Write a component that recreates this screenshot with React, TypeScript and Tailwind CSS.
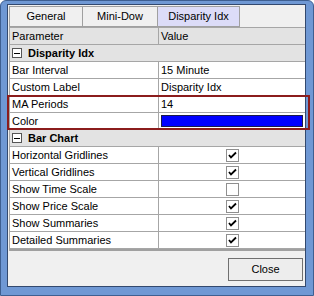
import React from "react";

const font = { fontFamily: '"Liberation Sans", Arial, sans-serif' };

function Check({ on }: { on: boolean }) {
  return (
    <div className="w-[13px] h-[13px] border border-[#8f8f8f] bg-white flex items-center justify-center">
      {on && (
        <svg width="9" height="9" viewBox="0 0 9 9">
          <path d="M1 4 L3 6.5 L8 1.5" stroke="#000" strokeWidth="1.8" fill="none" />
        </svg>
      )}
    </div>
  );
}

function Category({ label }: { label: string }) {
  return (
    <div className="h-[17px] flex items-center bg-[#e3e3e3] border-b border-[#a6a6a6]">
      <div className="ml-[2px] w-[10px] h-[10px] border border-[#555] bg-white flex items-center justify-center">
        <div className="w-[6px] h-px bg-black" />
      </div>
      <span className="ml-[6px] font-bold text-[11px] text-black">{label}</span>
    </div>
  );
}

function Row({ label, children }: { label: string; children: React.ReactNode }) {
  return (
    <div className="h-[17px] flex border-b border-[#a6a6a6] bg-white">
      <div className="w-[149px] border-r border-[#a6a6a6] flex items-center pl-[2px] text-[11px] text-black">{label}</div>
      <div className="flex-1 flex items-center pl-[2px] text-[11px] text-black">{children}</div>
    </div>
  );
}

function CheckRow({ label, on }: { label: string; on: boolean }) {
  return (
    <Row label={label}>
      <div className="w-full flex justify-center pr-[2px]">
        <Check on={on} />
      </div>
    </Row>
  );
}

export default function App() {
  return (
    <div style={font} className="w-[314px] h-[296px] bg-[#6f98d4] rounded-t-[6px] border border-[#3e5f91] pt-[3px] pl-[6px] pr-[7px] pb-[8px]">
      <div className="w-full h-full border border-[#33496e] bg-[#f0f0f0] flex flex-col">
        <div className="flex h-[22px] pt-[1px] pl-[1px]">
          <div className="w-[74px] h-[21px] border border-[#a0a0a0] bg-[#f0f0f0] flex items-center justify-center text-[11px] text-black">General</div>
          <div className="w-[75px] h-[21px] border border-l-0 border-[#a0a0a0] bg-[#f0f0f0] flex items-center justify-center text-[11px] text-black">Mini-Dow</div>
          <div className="w-[82px] h-[21px] border border-l-0 border-[#a0a0a0] bg-[#dcdcf8] flex items-center justify-center text-[11px] text-black">Disparity Idx</div>
        </div>
        <div className="ml-[1px] border-t border-l border-[#a6a6a6] relative">
          <div className="h-[17px] flex border-b border-[#a6a6a6] bg-[#e3e3e3]">
            <div className="w-[149px] border-r border-[#a6a6a6] flex items-center pl-[2px] text-[11px] text-black">Parameter</div>
            <div className="flex-1 flex items-center pl-[2px] text-[11px] text-black">Value</div>
          </div>
          <Category label="Disparity Idx" />
          <Row label="Bar Interval">15 Minute</Row>
          <Row label="Custom Label">Disparity Idx</Row>
          <Row label="MA Periods">14</Row>
          <Row label="Color">
            <div className="w-full mr-[2px] h-[12px] bg-[#0000ff] border border-[#1a1a4a]" />
          </Row>
          <Category label="Bar Chart" />
          <CheckRow label="Horizontal Gridlines" on />
          <CheckRow label="Vertical Gridlines" on />
          <CheckRow label="Show Time Scale" on={false} />
          <CheckRow label="Show Price Scale" on />
          <CheckRow label="Show Summaries" on />
          <CheckRow label="Detailed Summaries" on />
          <div className="h-[2px] bg-[#a0a0a0]" />
          <div className="absolute left-[-3px] right-[-5px] top-[67px] h-[35px] border-2 border-[#8b1c1c]" />
        </div>
        <div className="flex justify-end mt-[7px] pr-[2px]">
          <div className="w-[75px] h-[23px] border border-[#707070] bg-[#ededed] flex items-center justify-center text-[11px] text-black">Close</div>
        </div>
      </div>
    </div>
  );
}
